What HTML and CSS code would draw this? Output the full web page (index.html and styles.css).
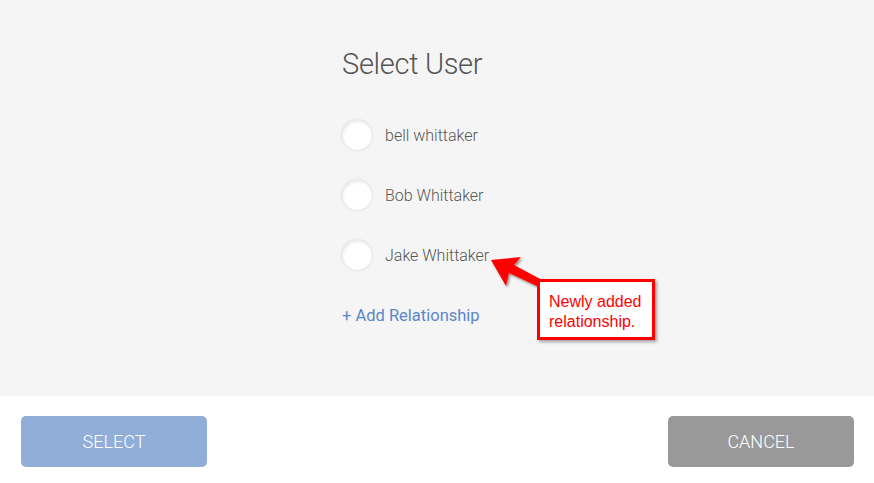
FILE: index.html
```html
<!DOCTYPE html>
<html>
<head>
<meta charset="utf-8">
<link rel="stylesheet" href="styles.css">
</head>
<body>
<div class="page">
  <section class="panel">
    <div class="column">
      <h1 class="title">Select User</h1>
      <div class="row"><span class="radio"></span><span class="name">bell whittaker</span></div>
      <div class="row"><span class="radio"></span><span class="name">Bob Whittaker</span></div>
      <div class="row"><span class="radio"></span><span class="name">Jake Whittaker</span></div>
      <div class="row"><a class="add">+ Add Relationship</a></div>
    </div>
  </section>
  <footer class="footer">
    <button class="btn btn-select">SELECT</button>
    <button class="btn btn-cancel">CANCEL</button>
  </footer>
  <svg class="arrow" width="874" height="483" viewBox="0 0 874 483">
    <defs>
      <filter id="sh" x="-20%" y="-20%" width="150%" height="150%">
        <feDropShadow dx="1.5" dy="2" stdDeviation="1.2" flood-color="#000" flood-opacity="0.4"/>
      </filter>
    </defs>
    <polygon filter="url(#sh)" fill="#ff0000" points="491,260 521,257 514,265 542,280 539,287 509,273 506,286"/>
  </svg>
  <div class="callout">Newly added<br>relationship.</div>
</div>
</body>
</html>
```
FILE: styles.css
```css
html, body {
  margin: 0;
  padding: 0;
}
body {
  width: 874px;
  height: 483px;
  overflow: hidden;
  background: #ffffff;
  font-family: Roboto, "Open Sans", sans-serif;
}
.page {
  position: relative;
  width: 874px;
  height: 483px;
}
.panel {
  height: 396px;
  background: #f5f5f5;
  box-sizing: border-box;
  padding-top: 46px;
}
.column {
  width: 190px;
  margin: 0 auto;
}
.title {
  margin: 0;
  font-weight: 300;
  font-size: 29px;
  letter-spacing: -0.3px;
  line-height: 36px;
  color: #555555;
  height: 36px;
  margin-bottom: 23px;
}
.row {
  height: 60px;
  display: flex;
  align-items: center;
}
.radio {
  width: 30px;
  height: 30px;
  border-radius: 50%;
  background: #ffffff;
  box-shadow: 0 0 3px rgba(0,0,0,0.14), inset 1px 2px 3px rgba(0,0,0,0.08);
  flex: none;
  margin-right: 13px;
}
.name {
  font-size: 16px;
  font-weight: 300;
  color: #555555;
}
.add {
  font-size: 16.5px;
  font-weight: 400;
  color: #5b86c8;
}
.footer {
  display: flex;
  justify-content: space-between;
  padding: 20px 20px 0 21px;
}
.btn {
  width: 186px;
  height: 51px;
  border: none;
  border-radius: 5px;
  color: #ffffff;
  font-family: Roboto, "Open Sans", sans-serif;
  font-weight: 300;
  font-size: 18px;
  padding: 0;
}
.btn-select {
  background: #91aed8;
}
.btn-cancel {
  background: #999999;
}
.arrow {
  position: absolute;
  left: 0;
  top: 0;
  pointer-events: none;
}
.callout {
  position: absolute;
  left: 537px;
  top: 279px;
  width: 103px;
  height: 45px;
  padding: 10px 0 0 9px;
  border: 3px solid #ff0000;
  background: #ffffff;
  box-shadow: 2px 2px 3px rgba(0,0,0,0.35);
  font-family: "Liberation Sans", Arial, sans-serif;
  font-size: 16px;
  line-height: 20px;
  color: #ff0000;
}
```
